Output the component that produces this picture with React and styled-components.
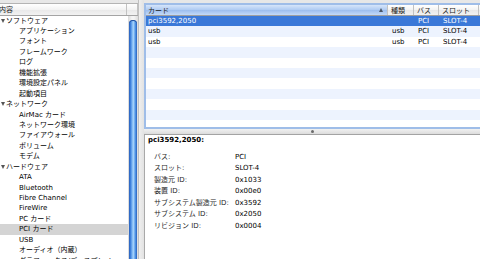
import React from "react";
import styled, { createGlobalStyle } from "styled-components";

const ROW = 10.45;

const GlobalStyle = createGlobalStyle`
  html, body {
    margin: 0;
    padding: 0;
    background: #e7e7e7;
    overflow: hidden;
  }
  body {
    font-family: "DejaVu Sans", "Noto Sans CJK JP", sans-serif;
    font-size: 7px;
    color: #000;
  }
`;

const Window = styled.div`
  display: flex;
  width: 480px;
  height: 259px;
  overflow: hidden;
  background: #e7e7e7;
`;

const Sidebar = styled.div`
  width: 138px;
  flex: none;
  display: flex;
  flex-direction: column;
  padding-top: 3px;
  box-sizing: border-box;
`;

const HeaderRow = styled.div`
  display: flex;
  height: 12.6px;
  flex: none;
  box-sizing: border-box;
  border-top: 1px solid #b4b4b4;
  border-bottom: 1px solid #a4a4a4;
  background: linear-gradient(#ffffff, #f3f3f3 50%, #e8e8e8 51%, #f2f2f2);
`;

const HeaderCell = styled.div`
  flex: ${(p) => (p.$grow ? "1" : "none")};
  width: ${(p) => (p.$w ? `${p.$w}px` : "auto")};
  display: flex;
  align-items: center;
  justify-content: space-between;
  box-sizing: border-box;
  padding: 0 4px 0 ${(p) => p.$pad ?? 3}px;
  margin-left: ${(p) => p.$shift ?? 0}px;
  border-right: 1px solid #c2c2c2;
  color: #222;
  white-space: nowrap;
  overflow: hidden;
  background: ${(p) =>
    p.$sorted
      ? "linear-gradient(#d6e5fa, #aecaf2 50%, #9bbdee 51%, #c4daf8)"
      : "transparent"};
`;

const SortArrow = styled.span`
  width: 0;
  height: 0;
  border-left: 2.5px solid transparent;
  border-right: 2.5px solid transparent;
  border-bottom: 4px solid #4a5566;
`;

const SideBody = styled.div`
  flex: 1;
  display: flex;
  min-height: 0;
`;

const TreeList = styled.div`
  width: 128px;
  flex: none;
  background: #fff;
  overflow: hidden;
`;

const TreeRow = styled.div`
  height: ${ROW}px;
  line-height: ${ROW}px;
  display: flex;
  align-items: center;
  padding-left: ${(p) => (p.$child ? 19 : 1)}px;
  white-space: nowrap;
  background: ${(p) => (p.$selected ? "#d4d4d4" : "transparent")};
`;

const Disclosure = styled.span`
  width: 0;
  height: 0;
  margin-right: 1px;
  border-left: 2.5px solid transparent;
  border-right: 2.5px solid transparent;
  border-top: 4px solid #555;
`;

const Scrollbar = styled.div`
  width: 10px;
  flex: none;
  display: flex;
  flex-direction: column;
  padding-top: 4px;
  box-sizing: border-box;
  background: linear-gradient(to right, #d9d9d9, #f4f4f4 40%, #f4f4f4 60%, #dcdcdc);
`;

const Thumb = styled.div`
  flex: 1;
  margin: 0 1px;
  border-radius: 4px 4px 0 0;
  background: linear-gradient(
    to right,
    #2a5fb8,
    #3f82de 20%,
    #8cc2f7 45%,
    #a6d3fb 55%,
    #4e93e6 80%,
    #2a5fb8
  );
  box-shadow: inset 0 1px 0 #1f4f9e;
`;

const VSplit = styled.div`
  width: 5px;
  flex: none;
  border-left: 1px solid #c0c0c0;
  background: linear-gradient(to right, #efefef, #e2e2e2);
`;

const Main = styled.div`
  flex: 1;
  display: flex;
  flex-direction: column;
  min-width: 0;
`;

const TableArea = styled.div`
  height: 129px;
  flex: none;
  padding-top: 3px;
  box-sizing: border-box;
`;

const TableBox = styled.div`
  height: 100%;
  box-sizing: border-box;
  border: 2px solid #9fbde8;
  border-right: none;
  background: #fff;
  overflow: hidden;
  display: flex;
  flex-direction: column;
`;

const TableHeader = styled(HeaderRow)`
  height: 10.8px;
  border-top: none;
  border-bottom: 1px solid #9f9f9f;
`;

const Row = styled.div`
  display: flex;
  height: ${ROW}px;
  line-height: ${ROW}px;
  flex: none;
  color: ${(p) => (p.$selected ? "#fff" : "#000")};
  background: ${(p) =>
    p.$selected ? "#3a78d8" : p.$alt ? "#edf3fe" : "#ffffff"};
`;

const Cell = styled.div`
  flex: ${(p) => (p.$grow ? "1" : "none")};
  width: ${(p) => (p.$w ? `${p.$w}px` : "auto")};
  box-sizing: border-box;
  padding-left: ${(p) => p.$pad ?? 4}px;
  white-space: nowrap;
  overflow: hidden;
`;

const HSplit = styled.div`
  height: 5px;
  flex: none;
  display: flex;
  align-items: center;
  justify-content: center;
  background: linear-gradient(#f1f1f1, #dcdcdc);
  border-bottom: 1px solid #a3a3a3;
`;

const Dimple = styled.span`
  width: 3px;
  height: 3px;
  border-radius: 50%;
  background: #6b6b6b;
`;

const Detail = styled.div`
  flex: 1;
  background: #fff;
  border-left: 1px solid #a9a9a9;
  padding-left: 3px;
  line-height: 11.5px;
`;

const DetailTitle = styled.div`
  font-weight: bold;
  margin-bottom: 5px;
`;

const PropRow = styled.div`
  display: flex;
  padding-left: 6px;
  white-space: nowrap;
`;

const PropKey = styled.span`
  width: 81px;
  flex: none;
  color: #2a2a2a;
`;

const PropValue = styled.span`
  color: #000;
`;

const tree = [
  {
    title: "ソフトウェア",
    items: [
      "アプリケーション",
      "フォント",
      "フレームワーク",
      "ログ",
      "機能拡張",
      "環境設定パネル",
      "起動項目",
    ],
  },
  {
    title: "ネットワーク",
    items: ["AirMac カード", "ネットワーク環境", "ファイアウォール", "ボリューム", "モデム"],
  },
  {
    title: "ハードウェア",
    items: [
      "ATA",
      "Bluetooth",
      "Fibre Channel",
      "FireWire",
      "PC カード",
      "PCI カード",
      "USB",
      "オーディオ（内蔵）",
      "グラフィックス/ディスプレイ",
    ],
  },
];

const cols = [
  { key: "card", w: 242, pad: 2 },
  { key: "kind", w: 26 },
  { key: "bus", w: 25 },
  { key: "slot", w: 40 },
];

const rows = [
  { card: "pci3592,2050", kind: "", bus: "PCI", slot: "SLOT-4", selected: true },
  { card: "usb", kind: "usb", bus: "PCI", slot: "SLOT-4" },
  { card: "usb", kind: "usb", bus: "PCI", slot: "SLOT-4" },
];

const props = [
  ["バス:", "PCI"],
  ["スロット:", "SLOT-4"],
  ["製造元 ID:", "0x1033"],
  ["装置 ID:", "0x00e0"],
  ["サブシステム製造元 ID:", "0x3592"],
  ["サブシステム ID:", "0x2050"],
  ["リビジョン ID:", "0x0004"],
];

const App = () => {
  const tableRows = [...rows];
  while (tableRows.length < 12) tableRows.push({});

  return (
    <>
      <GlobalStyle />
      <Window>
        <Sidebar>
          <HeaderRow>
            <HeaderCell $w={128} $pad={0} $shift={-1}>
              内容
            </HeaderCell>
            <HeaderCell $grow />
          </HeaderRow>
          <SideBody>
            <TreeList>
              {tree.map((group) => (
                <React.Fragment key={group.title}>
                  <TreeRow>
                    <Disclosure />
                    {group.title}
                  </TreeRow>
                  {group.items.map((item) => (
                    <TreeRow key={item} $child $selected={item === "PCI カード"}>
                      {item}
                    </TreeRow>
                  ))}
                </React.Fragment>
              ))}
            </TreeList>
            <Scrollbar>
              <Thumb />
            </Scrollbar>
          </SideBody>
        </Sidebar>
        <VSplit />
        <Main>
          <TableArea>
            <TableBox>
              <TableHeader>
                <HeaderCell $w={242} $pad={2} $sorted>
                  カード
                  <SortArrow />
                </HeaderCell>
                <HeaderCell $w={26}>種類</HeaderCell>
                <HeaderCell $w={25}>バス</HeaderCell>
                <HeaderCell $w={40}>スロット</HeaderCell>
                <HeaderCell $grow />
              </TableHeader>
              {tableRows.map((r, i) => (
                <Row key={i} $selected={r.selected} $alt={i % 2 === 1}>
                  {cols.map((c) => (
                    <Cell key={c.key} $w={c.w} $pad={c.pad}>
                      {r[c.key] || ""}
                    </Cell>
                  ))}
                  <Cell $grow />
                </Row>
              ))}
            </TableBox>
          </TableArea>
          <HSplit>
            <Dimple />
          </HSplit>
          <Detail>
            <DetailTitle>pci3592,2050:</DetailTitle>
            {props.map(([k, v]) => (
              <PropRow key={k}>
                <PropKey>{k}</PropKey>
                <PropValue>{v}</PropValue>
              </PropRow>
            ))}
          </Detail>
        </Main>
      </Window>
    </>
  );
};

export default App;
